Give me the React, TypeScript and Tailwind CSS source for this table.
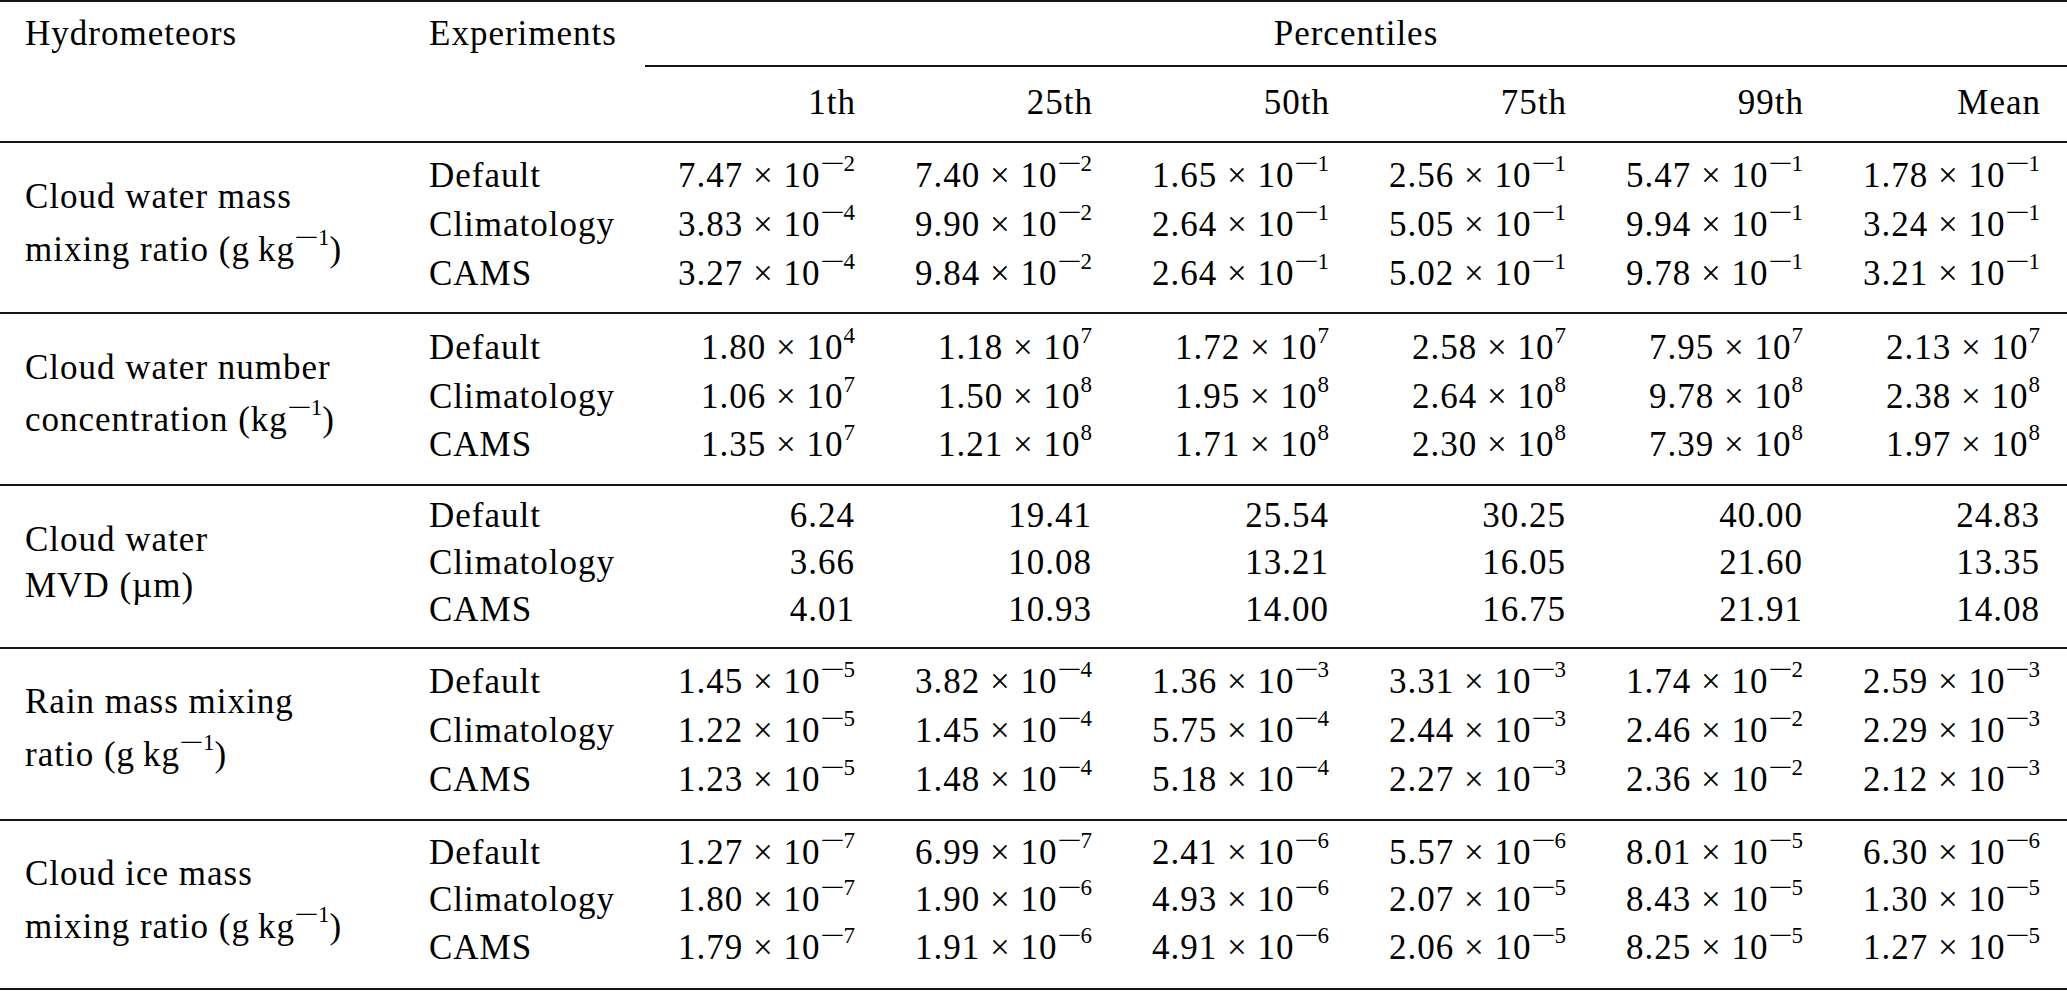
const experiments = ['Default', 'Climatology', 'CAMS'];
const percentiles = ['1th', '25th', '50th', '75th', '99th', 'Mean'];

type Section = {
  label: [string, string, string?];
  rows: string[][];
  box: string;
  row: string;
  labelBox: string;
  labelGap: string;
};

const sections: Section[] = [
  {
    label: ['Cloud water mass', 'mixing ratio (g\u2009kg', '-1'],
    rows: [
      ['7.47e-2', '7.40e-2', '1.65e-1', '2.56e-1', '5.47e-1', '1.78e-1'],
      ['3.83e-4', '9.90e-2', '2.64e-1', '5.05e-1', '9.94e-1', '3.24e-1'],
      ['3.27e-4', '9.84e-2', '2.64e-1', '5.02e-1', '9.78e-1', '3.21e-1'],
    ],
    box: 'pt-[8px] pb-[14px]',
    row: 'leading-[49px]',
    labelBox: 'pt-[31px]',
    labelGap: 'mt-[7px]',
  },
  {
    label: ['Cloud water number', 'concentration (kg', '-1'],
    rows: [
      ['1.80e4', '1.18e7', '1.72e7', '2.58e7', '7.95e7', '2.13e7'],
      ['1.06e7', '1.50e8', '1.95e8', '2.64e8', '9.78e8', '2.38e8'],
      ['1.35e7', '1.21e8', '1.71e8', '2.30e8', '7.39e8', '1.97e8'],
    ],
    box: 'pt-[10px] pb-[14px]',
    row: 'leading-[48.5px]',
    labelBox: 'pt-[31px]',
    labelGap: 'mt-[6px]',
  },
  {
    label: ['Cloud water', 'MVD (µm)'],
    rows: [
      ['6.24', '19.41', '25.54', '30.25', '40.00', '24.83'],
      ['3.66', '10.08', '13.21', '16.05', '21.60', '13.35'],
      ['4.01', '10.93', '14.00', '16.75', '21.91', '14.08'],
    ],
    box: 'pt-[6px] pb-[14px]',
    row: 'leading-[47px]',
    labelBox: 'pt-[31px]',
    labelGap: 'mt-0',
  },
  {
    label: ['Rain mass mixing', 'ratio (g\u2009kg', '-1'],
    rows: [
      ['1.45e-5', '3.82e-4', '1.36e-3', '3.31e-3', '1.74e-2', '2.59e-3'],
      ['1.22e-5', '1.45e-4', '5.75e-4', '2.44e-3', '2.46e-2', '2.29e-3'],
      ['1.23e-5', '1.48e-4', '5.18e-4', '2.27e-3', '2.36e-2', '2.12e-3'],
    ],
    box: 'pt-[8px] pb-[15px]',
    row: 'leading-[49px]',
    labelBox: 'pt-[30px]',
    labelGap: 'mt-[7px]',
  },
  {
    label: ['Cloud ice mass', 'mixing ratio (g\u2009kg', '-1'],
    rows: [
      ['1.27e-7', '6.99e-7', '2.41e-6', '5.57e-6', '8.01e-5', '6.30e-6'],
      ['1.80e-7', '1.90e-6', '4.93e-6', '2.07e-5', '8.43e-5', '1.30e-5'],
      ['1.79e-7', '1.91e-6', '4.91e-6', '2.06e-5', '8.25e-5', '1.27e-5'],
    ],
    box: 'pt-[8px] pb-[17px]',
    row: 'leading-[47.5px]',
    labelBox: 'pt-[30px]',
    labelGap: 'mt-[7px]',
  },
];

// exponent like "-2" or "7"; the math minus is drawn wider, as in the typeset table
function Sup({ exp }: { exp: string }) {
  const neg = exp.startsWith('-');
  return (
    <sup className="-top-[16px] text-[23px] tracking-normal">
      {neg && <span className="inline-block scale-x-[1.9] mx-[5px]">−</span>}
      {neg ? exp.slice(1) : exp}
    </sup>
  );
}

function Value({ v }: { v: string }) {
  if (!v.includes('e')) return <>{v}</>;
  const [m, e] = v.split('e');
  return (
    <>
      {m} × 10<Sup exp={e} />
    </>
  );
}

export default function App() {
  return (
    <div className="w-full min-h-screen bg-white text-black font-[family-name:Liberation_Serif,serif] text-[35px] tracking-[1px]">
      <div className="border-t-2 border-[#151515]">
        {/* header */}
        <div className="grid grid-cols-[404px_241px_repeat(6,minmax(0,1fr))] pt-[8px] pb-[14px] border-b-2 border-[#151515]">
          <div className="pl-[25px] leading-[48px]">Hydrometeors</div>
          <div className="pl-[25px] leading-[48px]">Experiments</div>
          <div className="col-span-6 text-center leading-[48px] pb-[7px] border-b-2 border-[#151515]">Percentiles</div>
          {percentiles.map((p, i) => (
            <div key={p} className={`${i === 0 ? 'col-start-3' : ''} mt-[12px] text-right pr-[26px] leading-[48px]`}>
              {p}
            </div>
          ))}
        </div>

        {sections.map((s) => (
          <div key={s.label[0]} className="flex items-start border-b-2 border-[#151515]">
            <div className={`w-[404px] shrink-0 pl-[25px] leading-[46px] ${s.labelBox}`}>
              <div>{s.label[0]}</div>
              <div className={s.labelGap}>
                {s.label[1]}
                {s.label[2] && (
                  <>
                    <Sup exp={s.label[2]} />)
                  </>
                )}
              </div>
            </div>
            <div className={`flex-1 ${s.box}`}>
              {s.rows.map((r, i) => (
                <div key={i} className={`grid grid-cols-[241px_repeat(6,minmax(0,1fr))] ${s.row}`}>
                  <div className="pl-[25px]">{experiments[i]}</div>
                  {r.map((v, j) => (
                    <div key={j} className="text-right pr-[27px] whitespace-nowrap">
                      <Value v={v} />
                    </div>
                  ))}
                </div>
              ))}
            </div>
          </div>
        ))}
      </div>
    </div>
  );
}
